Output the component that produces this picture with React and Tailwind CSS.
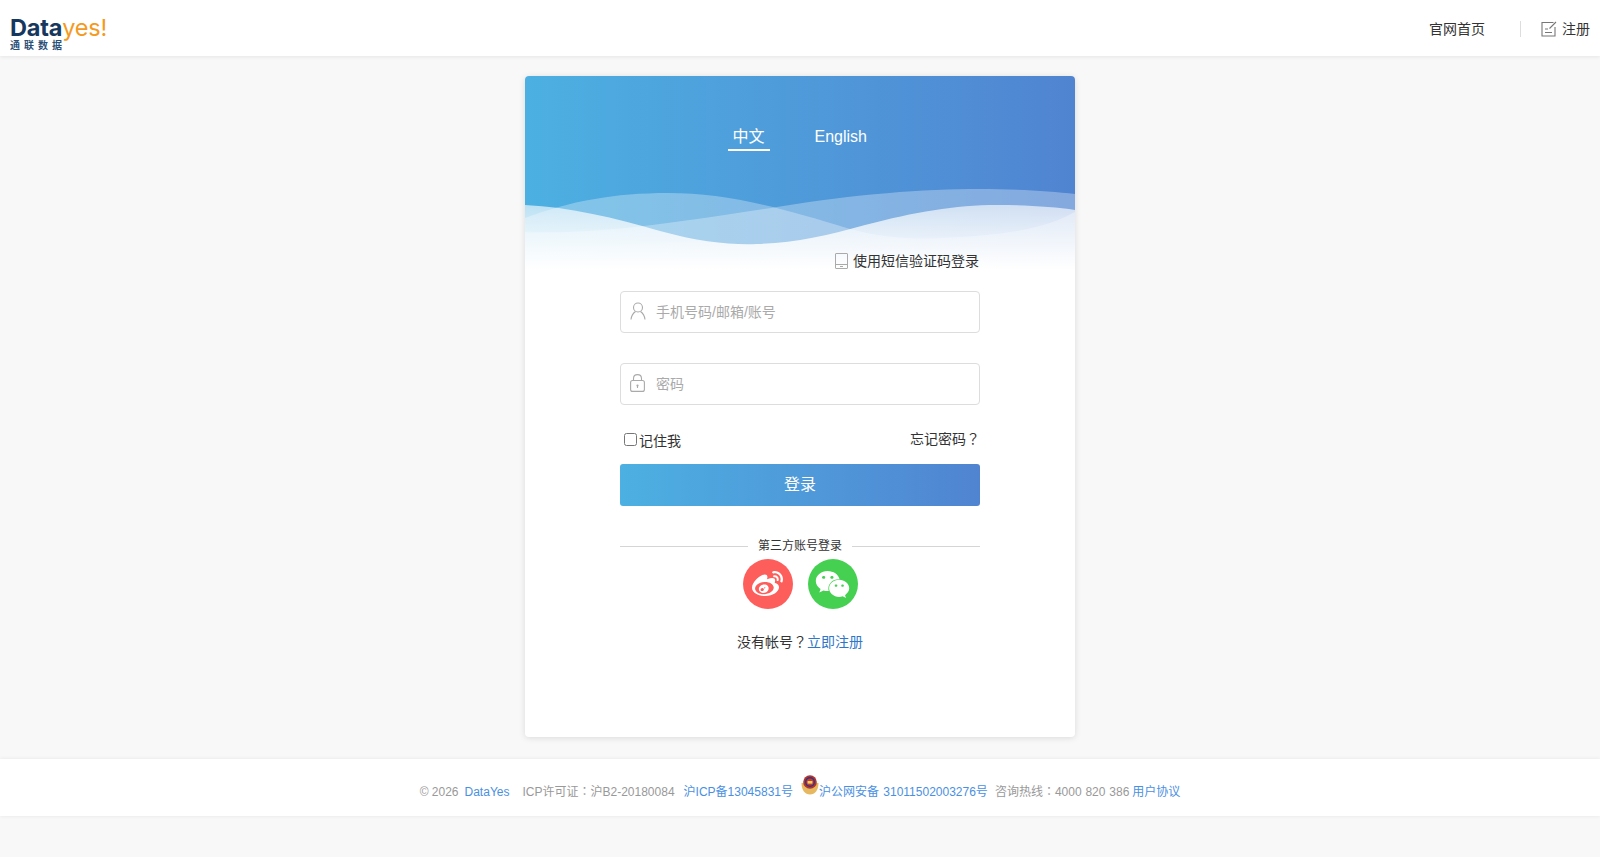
import { FaWeibo, FaWeixin } from 'react-icons/fa';

const FONT = { fontFamily: '"Liberation Sans", "Noto Sans CJK SC", sans-serif' };

function Punct({ children }) {
  return <span className="font-['Noto_Sans_CJK_TC'] leading-none">{children}</span>;
}

function Logo() {
  return (
    <div className="flex flex-col w-[110px] pl-[10px] pt-[10px]">
      <div className="flex items-baseline h-[25px] leading-[25px] text-[23.5px] tracking-[-0.2px]" style={{ fontFamily: 'Inter, sans-serif' }}>
        <span className="font-bold text-[#16385f]">Data</span>
        <span className="text-[#f49a1e]">yes!</span>
      </div>
      <div className="flex gap-[4px] text-[10px] leading-[11px] font-bold text-[#2c4f78] whitespace-nowrap">
        <span>通</span><span>联</span><span>数</span><span>据</span>
      </div>
    </div>
  );
}

function Waves() {
  return (
    <svg className="absolute left-0 top-0" width="550" height="200" viewBox="0 0 550 200">
      <defs>
        <linearGradient id="fade" gradientUnits="userSpaceOnUse" x1="0" y1="125" x2="0" y2="194">
          <stop offset="0" stopColor="#fff" stopOpacity="0.6" />
          <stop offset="0.55" stopColor="#fff" stopOpacity="0.82" />
          <stop offset="1" stopColor="#fff" stopOpacity="1" />
        </linearGradient>
      </defs>
      <path d="M0 142 C45 125 90 117 143 117 C200 117 250 130 325 153 C370 165 405 163 436 161 C490 158 525 150 550 136 L550 200 L0 200 Z" fill="#fff" fillOpacity="0.3" />
      <path d="M0 156 C70 158 130 150 252 131 C330 118 400 113 454 113 C490 113 525 115 550 118 L550 200 L0 200 Z" fill="#fff" fillOpacity="0.3" />
      <path d="M0 129 C45 131 90 142 135 155 C175 166 205 169 232 168 C270 167 300 160 340 149 C390 136 430 129 472 129 C500 129 530 131 550 134 L550 200 L0 200 Z" fill="url(#fade)" />
    </svg>
  );
}

function PoliceBadge() {
  return (
    <svg width="18" height="20" viewBox="0 0 18 20" className="shrink-0">
      <path d="M0.5 8 C0.5 15 4 19.5 9 19.5 C14 19.5 17.5 15 17.5 8 Z" fill="#e6b860" />
      <circle cx="9" cy="7" r="6.8" fill="#b9322a" />
      <circle cx="9" cy="7" r="5" fill="#1d3f8f" />
      <circle cx="9" cy="7" r="3.6" fill="#d9352a" />
      <rect x="6.6" y="6" width="4.8" height="2.6" fill="#f5d35a" />
    </svg>
  );
}

function UserIcon() {
  return (
    <svg width="16" height="18" viewBox="0 0 16 18" fill="none" stroke="#aaa" strokeWidth="1.1" className="absolute left-[10px] top-[11px]">
      <circle cx="8" cy="5.5" r="4.5" />
      <path d="M1 17.5 C1.5 13 4 10.5 5.5 9.5 M15 17.5 C14.5 13 12 10.5 10.5 9.5" />
    </svg>
  );
}

function LockIcon() {
  return (
    <svg width="15" height="18" viewBox="0 0 15 18" fill="none" stroke="#aaa" strokeWidth="1.1" className="absolute left-[10px] top-[11px]">
      <rect x="0.6" y="6.5" width="13.8" height="10.9" rx="2" />
      <path d="M3.5 6.5 V4.5 C3.5 2 5.2 0.6 7.5 0.6 C9.8 0.6 11.5 2 11.5 4.5 V6.5" />
      <circle cx="7.5" cy="11.5" r="1.1" fill="#aaa" stroke="none" />
      <path d="M7.5 12v2" />
    </svg>
  );
}

export default function App() {
  return (
    <div className="min-h-[857px] bg-[#f8f8f8] text-[#333] text-sm" style={FONT}>
      {/* 顶栏 */}
      <div className="h-14 bg-white shadow-[0_1px_4px_rgba(0,0,0,0.08)] flex items-center justify-between pr-[10px]">
        <Logo />
        <div className="flex items-center pt-[2px]">
          <a className="w-[56px] whitespace-nowrap">官网首页</a>
          <div className="w-px h-4 bg-[#ddd] ml-[35px] mr-[20px]" />
          <svg width="16" height="16" viewBox="0 0 16 16" fill="none" stroke="#777" strokeWidth="1.1" className="mr-[5px]">
            <path d="M12.5 1.5H1v13.5h13V6" />
            <path d="M15 1 8.5 7.5" />
            <path d="M4 8h3M4 11.5h7" />
          </svg>
          <a className="whitespace-nowrap">注册</a>
        </div>
      </div>

      {/* 登录卡片 */}
      <div className="w-[550px] h-[661px] mx-auto mt-5 bg-white rounded shadow-[0_1px_6px_rgba(0,0,0,0.12)] overflow-hidden">
        <div className="relative h-[200px] bg-gradient-to-r from-[#4cb0e2] to-[#5084d1]">
          <Waves />
          <div className="relative flex justify-center pt-[50px] text-base text-white leading-[22px] -ml-[2px]">
            <div className="w-[42px] h-[25px] text-center border-b-2 border-white">中文</div>
            <div className="ml-[45px] mr-[-4px] w-[60px]">English</div>
          </div>
        </div>
        <div className="relative -mt-[25px] w-[360px] mx-auto">
          <div className="flex items-center justify-end h-5 pr-[1px]">
            <svg width="13" height="16" viewBox="0 0 13 16" fill="none" stroke="#aaa" className="mr-[5px]">
              <rect x="0.5" y="0.5" width="12" height="15" rx="0.5" />
              <path d="M0.5 11.5h12M5 13.5h3" />
            </svg>
            <span>使用短信验证码登录</span>
          </div>

          <div className="relative mt-[20px]">
            <input className="w-full h-[42px] pl-[35px] border border-[#ddd] rounded bg-white outline-none placeholder:text-[#aaa]" placeholder="手机号码/邮箱/账号" />
            <UserIcon />
          </div>
          <div className="relative mt-[30px]">
            <input className="w-full h-[42px] pl-[35px] border border-[#ddd] rounded bg-white outline-none placeholder:text-[#aaa]" placeholder="密码" />
            <LockIcon />
          </div>

          <div className="flex justify-between mt-[24px] h-[35px]">
            <label className="flex items-center h-6 pl-1">
              <input type="checkbox" className="w-[13px] h-[13px] mr-[2px] mb-[3px]" />
              <span>记住我</span>
            </label>
            <a className="leading-5 whitespace-nowrap">忘记密码<Punct>？</Punct></a>
          </div>

          <button className="w-full h-[42px] rounded-[3px] text-base text-white bg-gradient-to-r from-[#4cb0e2] to-[#5084d1]">登录</button>

          <div className="flex items-center mt-[31px] h-[18px] text-xs">
            <div className="flex-1 h-px bg-[#d5d5d5]" />
            <span className="px-[10px]">第三方账号登录</span>
            <div className="flex-1 h-px bg-[#d5d5d5]" />
          </div>

          <div className="flex justify-center gap-[15px] mt-[4px]">
            <div className="w-[50px] h-[50px] rounded-full bg-[#fe5e5b] flex items-center justify-center">
              <FaWeibo className="w-[31px] h-[31px] text-white" />
            </div>
            <div className="w-[50px] h-[50px] rounded-full bg-[#45d052] flex items-center justify-center">
              <FaWeixin className="w-[35px] h-[35px] text-white" />
            </div>
          </div>

          <div className="text-center mt-[23px] leading-5">
            没有帐号<Punct>？</Punct><a className="text-[#2f76c9]">立即注册</a>
          </div>
        </div>
      </div>

      {/* 页脚 */}
      <div className="h-[57px] mt-[22px] bg-white shadow-[0_0_4px_rgba(0,0,0,0.08)] flex items-center justify-center text-xs text-[#999] pt-[8px] whitespace-nowrap">
        <span>© 2026</span>
        <a className="ml-[6px] text-[#4a90e2]">DataYes</a>
        <span className="ml-[13px]">ICP许可证<Punct>：</Punct>沪B2-20180084</span>
        <a className="ml-[9px] text-[#4a90e2]">沪ICP备13045831号</a>
        <span className="ml-[8px] -mt-[14px]"><PoliceBadge /></span>
        <a className="text-[#4a90e2] [word-spacing:1px]">沪公网安备 31011502003276号</a>
        <span className="ml-[7px]">咨询热线<Punct>：</Punct><span className="[word-spacing:0.5px]">4000 820 386</span></span>
        <a className="ml-[3px] text-[#4a90e2]">用户协议</a>
      </div>
    </div>
  );
}
